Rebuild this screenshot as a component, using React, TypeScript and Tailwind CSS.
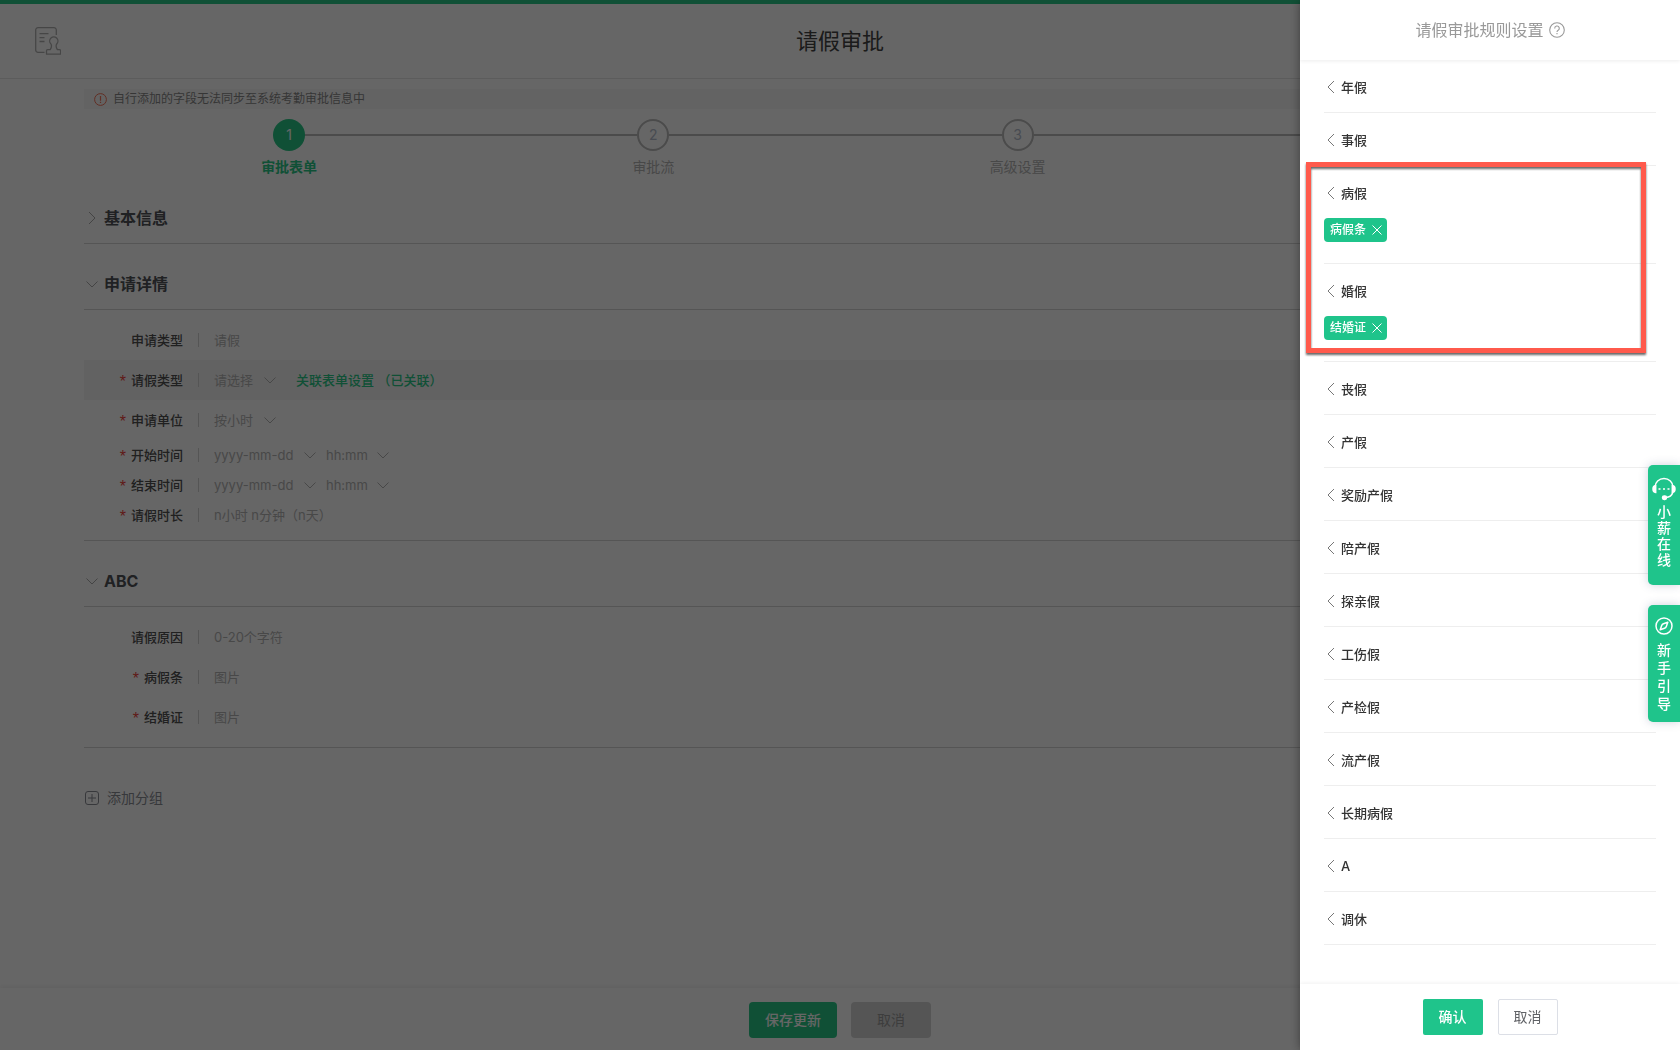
import React from 'react';

const steps = [
  { id: 1, title: '审批表单', active: true },
  { id: 2, title: '审批流', active: false },
  { id: 3, title: '高级设置', active: false }
];

type Leave = { name: string; tag?: string };

const leavesBefore: Leave[] = [{ name: '年假' }, { name: '事假' }];

const leavesLinked: Leave[] = [
  { name: '病假', tag: '病假条' },
  { name: '婚假', tag: '结婚证' }
];

const leavesAfter: Leave[] = [
  { name: '丧假' },
  { name: '产假' },
  { name: '奖励产假' },
  { name: '陪产假' },
  { name: '探亲假' },
  { name: '工伤假' },
  { name: '产检假' },
  { name: '流产假' },
  { name: '长期病假' },
  { name: 'A' },
  { name: '调休' }
];

const ChevronDown: React.FC<{ className?: string }> = ({ className = '' }) => (
  <svg className={`h-[7px] w-3 ${className}`} viewBox="0 0 12 7" fill="none" stroke="currentColor" strokeWidth="1">
    <path d="M.5.5 6 6 11.5.5" />
  </svg>
);

const ChevronLeft: React.FC = () => (
  <svg className="h-3.5 w-2 text-[#777]" viewBox="0 0 8 14" fill="none" stroke="currentColor" strokeWidth="1">
    <path d="M7 1 1 7l6 6" />
  </svg>
);

const ApprovalIcon: React.FC = () => (
  <svg className="h-7 w-[26px] text-[#b0b0b0]" viewBox="0 0 26 28" fill="none" stroke="currentColor" strokeWidth="1.3" strokeLinejoin="round">
    <path d="M9.500 25.300H3a2.300 2.300 0 0 1-2.300-2.300V3A2.300 2.300 0 0 1 3 .7h16A2.300 2.300 0 0 1 21.300 3v5" />
    <path d="M4.500 6.700h9M4.500 10.700h5M4.500 14.500h5" />
    <path d="M11.500 27.200v-3.400c0-.7.4-1.100 1.100-1.100h2.600c1.500-2.500 2-4.200.5-6a4.100 4.100 0 1 1 6.200 0c-1.500 1.800-1 3.500.5 6h2.100c.7 0 1.100.4 1.100 1.100v3.400z" />
  </svg>
);

const Select: React.FC<{ id: string; text: string; label?: string; width: string }> = ({ id, text, label, width }) => (
  <span className={`relative flex items-center ${width}`}>
    <select id={id} aria-label={label} className="w-full appearance-none bg-transparent leading-5 outline-none">
      <option>{text}</option>
    </select>
    <ChevronDown className="pointer-events-none absolute right-0" />
  </span>
);

const Section: React.FC<{ title: string; collapsed?: boolean; children?: React.ReactNode }> = ({ title, collapsed, children }) => (
  <section>
    <h2 className="border-b border-[#d4d4d4] pt-7 pb-[13px] text-base leading-6 font-bold text-[#505359]">
      <button className="flex items-center">
        <span className="flex w-5 pl-[2px] text-[#aaa]">
          {collapsed ? (
            <svg className="ml-[2px] h-3.5 w-2" viewBox="0 0 8 14" fill="none" stroke="currentColor">
              <path d="m1 1 6 6-6 6" />
            </svg>
          ) : (
            <ChevronDown />
          )}
        </span>
        {title}
      </button>
    </h2>
    {children && <div className="border-b border-[#d4d4d4] py-2.5">{children}</div>}
  </section>
);

const Field: React.FC<{
  label: string;
  htmlFor?: string;
  required?: boolean;
  compact?: boolean;
  highlight?: boolean;
  children: React.ReactNode;
}> = ({ label, htmlFor, required, compact, highlight, children }) => (
  <div className={`flex items-center text-[13px] leading-5 ${compact ? 'h-[30px]' : 'h-10'} ${highlight ? 'bg-[#f5f5f5]' : ''}`}>
    <label htmlFor={htmlFor} className="flex h-5 w-[99px] justify-end gap-[5px] font-medium text-[#505050]">
      {required && <span className="pt-0.5 font-['Liberation_Sans',sans-serif] text-base leading-5 text-[#f0443c]">*</span>}
      {label}
    </label>
    <span className="mx-[15px] h-3.5 w-px bg-[#d4d4d4]" />
    <div className="flex items-center text-[#b4b4b4]">{children}</div>
  </div>
);

const LeaveItem: React.FC<{ leave: Leave }> = ({ leave }) => (
  <li className="border-b border-[#eee] pt-[17px]">
    <button className="flex items-center gap-1.5 pl-[3px] text-[13px] leading-5 font-medium text-[#333]">
      <ChevronLeft />
      {leave.name}
    </button>
    {leave.tag ? (
      <div className="flex pt-[15px] pb-[21px]">
        <span className="flex h-6 items-center gap-1.5 rounded bg-[#1fc48b] pr-[5px] pl-1.5 text-xs font-medium text-white">
          {leave.tag}
          <button aria-label={`删除${leave.tag}`}>
            <svg className="h-2.5 w-2.5" viewBox="0 0 10 10" fill="none" stroke="currentColor">
              <path d="m.5.5 9 9m0-9-9 9" />
            </svg>
          </button>
        </span>
      </div>
    ) : (
      <div className="h-[15px]" />
    )}
  </li>
);

const ApprovalPage: React.FC = () => (
  <div className="flex min-h-screen flex-col border-t-4 border-[#2ac887] bg-white">
    <header className="grid h-[75px] grid-cols-3 items-center border-b border-[#e6e6e6] px-[35px]">
      <ApprovalIcon />
      <h1 className="text-center text-[22px] leading-8 text-[#444]">请假审批</h1>
    </header>

    <main className="flex-1 px-[84px] pt-2.5">
      <div className="flex h-5 items-center gap-1.5 bg-[#f7f7f7] pl-2.5 text-xs text-[#888]">
        <svg className="h-[13px] w-[13px] text-[#f4735a]" viewBox="0 0 13 13" fill="none" stroke="currentColor">
          <circle cx="6.500" cy="6.500" r="5.900" />
          <path d="M6.500 3v4.700M6.500 8.800v1.200" strokeWidth="1.200" />
        </svg>
        自行添加的字段无法同步至系统考勤审批信息中
      </div>

      <div className="flex pt-2.5 pl-[23px]">
        <ol className="grid w-3/4 shrink-0 grid-cols-3 pr-6">
          {steps.map((step) => (
            <li key={step.id} className="text-center text-sm">
              <div className="flex items-center">
                <span className={`h-0.5 flex-1 ${step.active ? '' : 'bg-[#bbb]'}`} />
                <span
                  className={`flex h-8 w-8 items-center justify-center rounded-full ${
                    step.active ? 'bg-[#2ac887] text-white' : 'border-2 border-[#bbb] text-[#b4bccc]'
                  }`}
                >
                  {step.id}
                </span>
                <span className="h-0.5 flex-1 bg-[#bbb]" />
              </div>
              <div className={`mt-1.5 leading-5 ${step.active ? 'font-bold text-[#2ac887]' : 'text-[#b4b4b4]'}`}>{step.title}</div>
            </li>
          ))}
        </ol>
        {/* the track runs on past the last step */}
        <span className="-ml-6 mt-[15px] h-0.5 flex-1 bg-[#bbb]" />
      </div>

      <div className="pt-px">
        <Section title="基本信息" collapsed />
      </div>

      <Section title="申请详情">
        <Field label="申请类型">请假</Field>
        <Field label="请假类型" htmlFor="leave-type" required highlight>
          <Select id="leave-type" text="请选择" width="w-[62px]" />
          <button className="ml-5 font-medium text-[#2ac887]">关联表单设置 （已关联）</button>
        </Field>
        <Field label="申请单位" htmlFor="unit" required>
          <Select id="unit" text="按小时" width="w-[62px]" />
        </Field>
        <Field label="开始时间" htmlFor="start-date" required compact>
          <Select id="start-date" text="yyyy-mm-dd" width="w-[102px]" />
          <span className="w-2.5" />
          <Select id="start-time" label="开始时刻" text="hh:mm" width="w-[63px]" />
        </Field>
        <Field label="结束时间" htmlFor="end-date" required compact>
          <Select id="end-date" text="yyyy-mm-dd" width="w-[102px]" />
          <span className="w-2.5" />
          <Select id="end-time" label="结束时刻" text="hh:mm" width="w-[63px]" />
        </Field>
        <Field label="请假时长" required compact>n小时 n分钟（n天）</Field>
      </Section>

      <Section title="ABC">
        <Field label="请假原因" htmlFor="reason">
          <input id="reason" type="text" placeholder="0-20个字符" className="w-80 bg-transparent outline-none placeholder:text-[#b4b4b4]" />
        </Field>
        <Field label="病假条" required>图片</Field>
        <Field label="结婚证" required>图片</Field>
      </Section>

      <button className="mt-10 mb-6 flex items-center gap-2 text-sm text-[#8a8d94]">
        <svg className="ml-px h-3.5 w-3.5" viewBox="0 0 14 14" fill="none" stroke="currentColor">
          <rect x=".5" y=".5" width="13" height="13" rx="2.500" />
          <path d="M3 7h8M7 3v8" />
        </svg>
        添加分组
      </button>
    </main>

    <footer className="flex justify-center gap-3.5 pt-3.5 pb-3 text-sm shadow-[0_-2px_4px_rgba(0,0,0,0.05)]">
      <button className="h-9 w-[88px] rounded bg-[#2ac887] font-medium text-white">保存更新</button>
      <button className="h-9 w-20 rounded bg-[#d4d4d4] text-[#999]">取消</button>
    </footer>
  </div>
);

const RulesDrawer: React.FC = () => (
  <aside className="fixed inset-y-0 right-0 flex w-[380px] flex-col bg-white shadow-[0_0_10px_rgba(0,0,0,0.4)]">
    <header className="flex h-[60px] shrink-0 items-center justify-center gap-[5px] text-base text-[#999] shadow-[0_1px_4px_rgba(0,0,0,0.08)]">
      <h2>请假审批规则设置</h2>
      <svg className="h-4 w-4" viewBox="0 0 16 16" fill="none" stroke="currentColor" strokeWidth="1.100">
        <circle cx="8" cy="8" r="7.300" />
        <path d="M5.700 6.400a2.300 2.300 0 1 1 3.500 1.900c-.8.5-1.200.9-1.200 1.700M8 11v1.300" />
      </svg>
    </header>

    <div className="flex-1 px-6">
      <ul>
        {leavesBefore.map((leave) => (
          <LeaveItem key={leave.name} leave={leave} />
        ))}
      </ul>
      <div className="relative">
        <ul>
          {leavesLinked.map((leave) => (
            <LeaveItem key={leave.name} leave={leave} />
          ))}
        </ul>
        {/* highlight frame around the linked leave types */}
        <div className="pointer-events-none absolute -top-1 right-2.5 bottom-[9px] -left-[18px] border-5 border-[#ff5a4c] drop-shadow-[0_2px_1px_rgba(0,0,0,0.6)]" />
      </div>
      <ul>
        {leavesAfter.map((leave) => (
          <LeaveItem key={leave.name} leave={leave} />
        ))}
      </ul>
    </div>

    <footer className="flex shrink-0 justify-center gap-[15px] pt-[15px] pb-[15px] text-sm shadow-[0_-1px_4px_rgba(0,0,0,0.06)]">
      <button className="h-9 w-[60px] rounded-xs bg-[#1fc48b] font-medium text-white">确认</button>
      <button className="h-9 w-[60px] rounded-xs border border-[#dcdfe6] text-[#606266]">取消</button>
    </footer>
  </aside>
);

const SideTabs: React.FC = () => (
  <div className="fixed top-[465px] right-0 flex w-8 flex-col gap-5 text-sm font-medium text-white">
    <button className="flex h-[120px] flex-col items-center rounded-l-[5px] bg-[#1fc48b] pt-3 shadow-[0_0_10px_rgba(60,70,120,0.25)]">
      <svg className="h-6 w-6" viewBox="0 0 24 24" fill="none" stroke="currentColor" strokeWidth="1.500">
        <path d="M3 10a9 8.500 0 0 1 18 0M20.800 15.500c-1 3.200-3.500 4.800-7 5" />
        <path d="M3.700 8.500v7C1.800 15.300 1 13.800 1 12s.8-3.300 2.700-3.500zM20.300 8.500v7c1.900-.2 2.700-1.700 2.700-3.500s-.8-3.300-2.700-3.500z" fill="currentColor" />
        <rect x="10.500" y="19" width="4" height="3.500" rx="1.700" fill="currentColor" />
        <path d="M6.500 12h2M11 12h2M15.500 12h2" />
      </svg>
      <span className="mt-[3px] w-3.5 leading-4">小薪在线</span>
    </button>
    <button className="flex h-[117px] flex-col items-center rounded-l-[5px] bg-[#1fc48b] pt-3 shadow-[0_0_10px_rgba(60,70,120,0.25)]">
      <svg className="h-[18px] w-[18px]" viewBox="0 0 18 18" fill="none" stroke="currentColor" strokeWidth="1.500" strokeLinejoin="round">
        <circle cx="9" cy="9" r="8" />
        <path d="M12.800 5.200 11.300 9.500c-.3.900-.9 1.500-1.800 1.800l-4.300 1.500 1.500-4.300c.3-.9.900-1.500 1.800-1.800z" />
      </svg>
      <span className="mt-1.5 w-3.5 leading-[18px]">新手引导</span>
    </button>
  </div>
);

export default function App() {
  return (
    <div className="font-[Inter,'Noto_Sans_CJK_SC',sans-serif]">
      <ApprovalPage />
      <div className="fixed inset-0 bg-black/60" />
      <RulesDrawer />
      <SideTabs />
    </div>
  );
}
